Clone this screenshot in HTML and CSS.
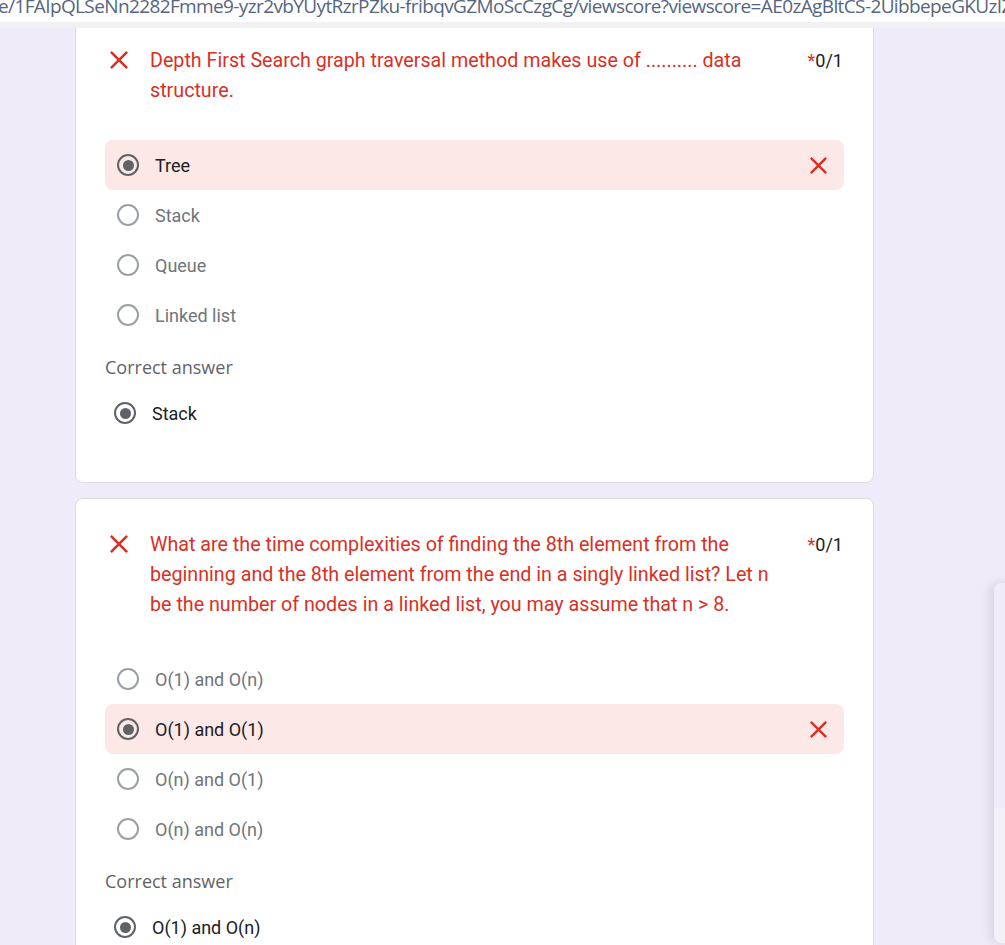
FILE: index.html
```html
<!DOCTYPE html>
<html lang="en">
<head>
<meta charset="utf-8">
<title>Quiz results</title>
<link rel="stylesheet" href="styles.css">
</head>
<body>
<div class="urlbar"><span class="url">e/1FAIpQLSeNn2282Fmme9-yzr2vbYUytRzrPZku-fribqvGZMoScCzgCg/viewscore?viewscore=AE0zAgBltCS-2UibbepeGKUzIZJmqpf0</span></div>
<div class="band"></div>
<main class="page">
  <section class="card card-first">
    <div class="q-head">
      <svg class="q-x" viewBox="5 5 14 14"><path d="M19 6.41L17.59 5 12 10.59 6.41 5 5 6.41 10.59 12 5 17.59 6.41 19 12 13.41 17.59 19 19 17.59 13.41 12z"/></svg>
      <div class="q-text">Depth First Search graph traversal method makes use of .......... data structure.</div>
      <div class="q-score"><span class="star">*</span>0/1</div>
    </div>
    <ul class="opts">
      <li class="opt opt-wrong"><span class="radio on"></span><span class="opt-label">Tree</span><svg class="opt-x" viewBox="5 5 14 14"><path d="M19 6.41L17.59 5 12 10.59 6.41 5 5 6.41 10.59 12 5 17.59 6.41 19 12 13.41 17.59 19 19 17.59 13.41 12z"/></svg></li>
      <li class="opt"><span class="radio"></span><span class="opt-label">Stack</span></li>
      <li class="opt"><span class="radio"></span><span class="opt-label">Queue</span></li>
      <li class="opt"><span class="radio"></span><span class="opt-label">Linked list</span></li>
    </ul>
    <div class="correct-label">Correct answer</div>
    <div class="correct"><span class="radio on"></span><span class="correct-text">Stack</span></div>
  </section>

  <section class="card card-second">
    <div class="q-head">
      <svg class="q-x" viewBox="5 5 14 14"><path d="M19 6.41L17.59 5 12 10.59 6.41 5 5 6.41 10.59 12 5 17.59 6.41 19 12 13.41 17.59 19 19 17.59 13.41 12z"/></svg>
      <div class="q-text">What are the time complexities of finding the 8th element from the beginning and the 8th element from the end in a singly linked list? Let n be the number of nodes in a linked list, you may assume that n &gt; 8.</div>
      <div class="q-score"><span class="star">*</span>0/1</div>
    </div>
    <ul class="opts">
      <li class="opt"><span class="radio"></span><span class="opt-label">O(1) and O(n)</span></li>
      <li class="opt opt-wrong"><span class="radio on"></span><span class="opt-label">O(1) and O(1)</span><svg class="opt-x" viewBox="5 5 14 14"><path d="M19 6.41L17.59 5 12 10.59 6.41 5 5 6.41 10.59 12 5 17.59 6.41 19 12 13.41 17.59 19 19 17.59 13.41 12z"/></svg></li>
      <li class="opt"><span class="radio"></span><span class="opt-label">O(n) and O(1)</span></li>
      <li class="opt"><span class="radio"></span><span class="opt-label">O(n) and O(n)</span></li>
    </ul>
    <div class="correct-label">Correct answer</div>
    <div class="correct"><span class="radio on"></span><span class="correct-text">O(1) and O(n)</span></div>
  </section>
</main>
<div class="sidepanel"><div class="sp-top"></div><div class="sp-bottom"></div></div>
</body>
</html>
```

FILE: styles.css
```css
html, body {
  margin: 0;
  padding: 0;
  height: 945px;
  overflow: hidden;
  background: #f0ebf8;
  font-family: Roboto, "Liberation Sans", sans-serif;
}

.urlbar {
  height: 22px;
  background: #ffffff;
  overflow: hidden;
  white-space: nowrap;
}

.url {
  display: block;
  margin-top: -7px;
  margin-left: -2px;
  font-family: "Open Sans", "Liberation Sans", sans-serif;
  font-size: 19px;
  line-height: 26px;
  color: #56657f;
  letter-spacing: -0.62px;
}

.band {
  height: 6px;
  background: #f1f1f1;
}

.page {
  height: 917px;
  overflow: hidden;
  padding-left: 75px;
}

.card {
  box-sizing: border-box;
  width: 799px;
  background: #ffffff;
  border: 1px solid #dadce0;
  border-radius: 8px;
  padding: 31px 29px 44px;
}

.card-first {
  margin-top: -14px;
  margin-bottom: 15px;
}

.q-head {
  display: flex;
  align-items: flex-start;
}

.q-x {
  width: 18px;
  height: 18px;
  fill: #d93025;
  margin: 5px 22px 0 5px;
  flex: none;
}

.q-text {
  flex: 1;
  font-size: 19.7px;
  line-height: 30px;
  color: #d93025;
  padding-right: 14px;
}

.q-score {
  flex: none;
  font-size: 18px;
  line-height: 30px;
  color: #202124;
  padding-right: 1px;
}

.star {
  color: #d93025;
}

.opts {
  list-style: none;
  margin: 34px 0 0;
  padding: 0;
}

.opt {
  display: flex;
  align-items: center;
  height: 50px;
  padding: 0 17px 0 12px;
  border-radius: 8px;
}

.opt-wrong {
  background: #fce8e6;
}

.radio {
  box-sizing: border-box;
  flex: none;
  width: 22px;
  height: 22px;
  border-radius: 50%;
  border: 2px solid #9aa0a6;
  display: flex;
  align-items: center;
  justify-content: center;
}

.radio.on {
  border-color: #5f6368;
}

.radio.on::after {
  content: "";
  width: 11px;
  height: 11px;
  border-radius: 50%;
  background: #5f6368;
}

.opt-label {
  flex: 1;
  margin-left: 16px;
  font-size: 18px;
  color: #70757a;
}

.opt-wrong .opt-label {
  color: #202124;
}

.opt-x {
  width: 17px;
  height: 17px;
  fill: #d93025;
  flex: none;
}

.correct-label {
  margin-top: 16px;
  font-family: "Open Sans", Roboto, sans-serif;
  font-weight: 500;
  font-size: 18px;
  line-height: 22px;
  color: #5f6368;
}

.correct {
  display: flex;
  align-items: center;
  height: 50px;
  margin-top: 10px;
  padding-left: 9px;
}

.correct-text {
  margin-left: 16px;
  font-size: 18px;
  color: #202124;
}

.sidepanel {
  position: absolute;
  left: 993px;
  top: 583px;
  width: 30px;
  height: 360px;
  border-radius: 8px 0 0 8px;
  overflow: hidden;
  box-shadow: -3px 0 10px rgba(60, 40, 90, 0.12);
  border-left: 1px solid #dcd8e4;
}

.sp-top {
  height: 225px;
  background: #efebf8;
}

.sp-bottom {
  height: 135px;
  background: #f3f0f7;
}
```
